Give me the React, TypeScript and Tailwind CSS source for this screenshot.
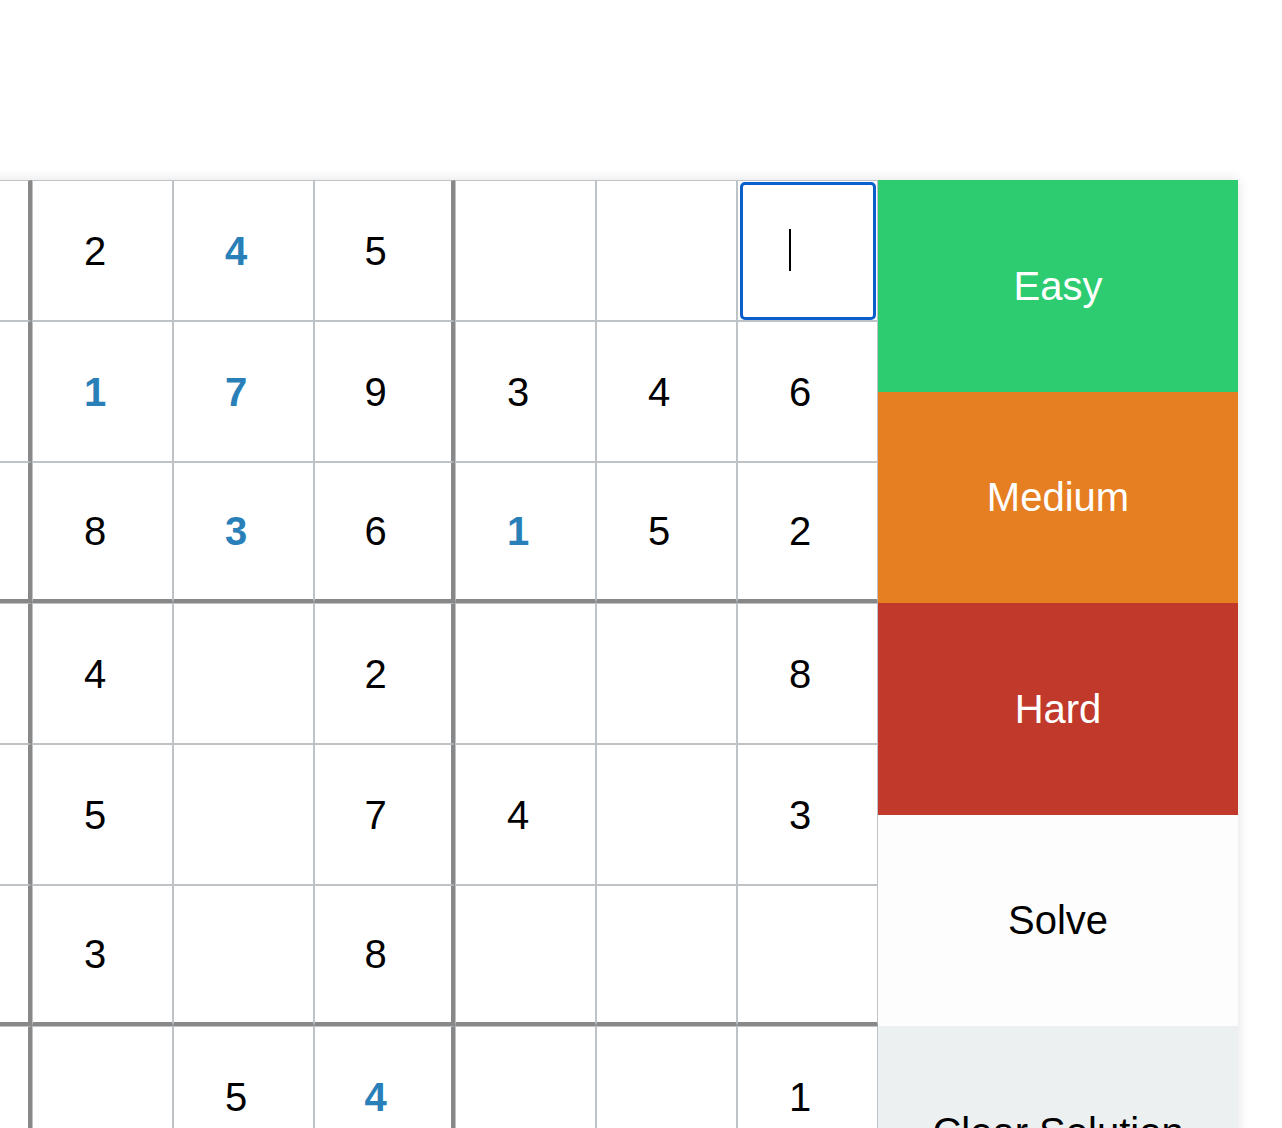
import React from 'react';

// 0 = empty, negative = given (bold blue), positive = user entered
const BOARD: number[][] = [
  [0, 0, 0, 2, -4, 5, 0, 0, 0],
  [0, 0, 0, -1, -7, 9, 3, 4, 6],
  [0, 0, 0, 8, -3, 6, -1, 5, 2],
  [0, 0, 0, 4, 0, 2, 0, 0, 8],
  [0, 0, 0, 5, 0, 7, 4, 0, 3],
  [0, 0, 0, 3, 0, 8, 0, 0, 0],
  [0, 0, 0, 0, 5, -4, 0, 0, 1],
  [0, 0, 0, 0, 0, 0, 0, 0, 0],
  [0, 0, 0, 0, 0, 0, 0, 0, 0],
];

const FOCUSED = { row: 0, col: 8 };

const buttons = [
  { label: 'Easy', className: 'bg-[#2ecc71] text-white' },
  { label: 'Medium', className: 'bg-[#e67e22] text-white' },
  { label: 'Hard', className: 'bg-[#c0392b] text-white' },
  { label: 'Solve', className: 'bg-[#fdfdfd] text-black' },
  { label: 'Clear Solution', className: 'bg-[#ecf0f1] text-black' },
  { label: 'Clear All', className: 'bg-[#fdfdfd] text-black' },
];

function Cell({ value, row, col }: { value: number; row: number; col: number }) {
  const isFocused = row === FOCUSED.row && col === FOCUSED.col;
  const boxRight = col === 2 || col === 5;
  const boxBottom = row === 2 || row === 5;

  return (
    <div
      className={`relative box-border flex h-[141px] w-[141px] items-center justify-center border border-[#bdc3c7] pr-[15px] text-[40px] leading-none ${
        boxRight ? 'border-r-4 border-r-[#888888]' : ''
      } ${boxBottom ? 'border-b-4 border-b-[#888888]' : ''} ${
        value < 0 ? 'font-bold text-[#2980b9]' : 'text-black'
      }`}
    >
      {value !== 0 ? Math.abs(value) : ''}
      {isFocused && (
        <>
          <div className="absolute left-[2px] right-px top-px bottom-0 rounded-[5px] border-[3px] border-[#0b5fcc]" />
          <div className="absolute left-[51px] top-[48px] h-[42px] w-[1.5px] bg-black" />
        </>
      )}
    </div>
  );
}

export default function App() {
  return (
    <div className="h-[1128px] w-full overflow-hidden bg-white font-['Liberation_Sans',Arial,sans-serif]">
      <div className="pt-[180px]">
        <div className="ml-[-391px] flex w-max bg-white shadow-[0_0_12px_rgba(0,0,0,0.12)]">
          <div className="grid grid-cols-[repeat(9,141px)]">
            {BOARD.map((r, ri) =>
              r.map((v, ci) => <Cell key={`${ri}-${ci}`} value={v} row={ri} col={ci} />),
            )}
          </div>
          <div className="flex w-[360px] flex-col">
            {buttons.map((b) => (
              <button
                key={b.label}
                type="button"
                className={`flex flex-1 items-center justify-center text-[40px] ${b.className}`}
              >
                {b.label}
              </button>
            ))}
          </div>
        </div>
      </div>
    </div>
  );
}
